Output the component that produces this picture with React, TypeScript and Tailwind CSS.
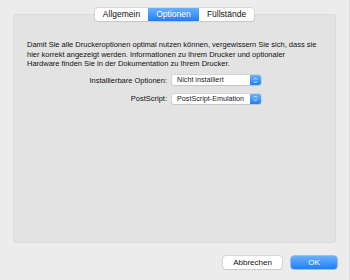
import { useState } from "react";

function Stepper() {
  return (
    <div className="flex h-full w-[11px] items-center justify-center rounded-r-[2px] bg-gradient-to-b from-[#6cb3fa] to-[#1a7ff6]">
      <svg width="5" height="7" viewBox="0 0 5 7" fill="none">
        <path d="M1 2.6 L2.5 1.1 L4 2.6" stroke="white" strokeWidth="0.9" />
        <path d="M1 4.4 L2.5 5.9 L4 4.4" stroke="white" strokeWidth="0.9" />
      </svg>
    </div>
  );
}

function Popup({ value }: { value: string }) {
  return (
    <div className="flex h-[10px] w-[89px] items-stretch rounded-[2px] bg-white shadow-[0_0_0_0.5px_#c4c4c4,0_1px_1px_rgba(0,0,0,0.12)]">
      <span className="flex-1 overflow-hidden whitespace-nowrap pl-[5px] text-[7.2px] leading-[10px] text-[#1a1a1a]">{value}</span>
      <Stepper />
    </div>
  );
}

function App() {
  const [tab, setTab] = useState("Optionen");
  const tabs = [
    { name: "Allgemein", w: "w-[53px]" },
    { name: "Optionen", w: "w-[51px]" },
    { name: "Füllstände", w: "w-[55px]" },
  ];

  return (
    <div
      className="flex h-[280px] w-[350px] flex-col border-r border-[#dcdcdc] bg-[#ececec] text-[#111]"
      style={{ fontFamily: '"Liberation Sans", Arial, sans-serif' }}
    >
      <div className="px-[13px] pt-[8px]">
        <div className="relative z-10 flex justify-center">
          <div className="flex h-[13px] overflow-hidden rounded-[3px] bg-white shadow-[0_0_0_0.5px_#c2c2c2,0_1px_1px_rgba(0,0,0,0.1)]">
            {tabs.map((t, i) => (
              <button
                key={t.name}
                onClick={() => setTab(t.name)}
                className={`${t.w} flex items-center justify-center text-[8.5px] leading-[13px] ${
                  tab === t.name
                    ? "bg-gradient-to-b from-[#68b0fa] to-[#1a7ff6] text-white"
                    : "text-[#111]"
                } ${i > 0 && tab !== t.name && tabs[i - 1].name !== tab ? "border-l border-[#d0d0d0]" : ""}`}
              >
                {t.name}
              </button>
            ))}
          </div>
        </div>

        <div className="-mt-[7px] h-[229px] rounded-[3px] border border-[#dadada] bg-[#e3e3e3] px-[13px] pt-[25px]">
          <p className="whitespace-nowrap text-[7.5px] leading-[9.6px]">
            Damit Sie alle Druckeroptionen optimal nutzen können, vergewissern Sie sich, dass sie
            <br />
            hier korrekt angezeigt werden. Informationen zu Ihrem Drucker und optionaler
            <br />
            Hardware finden Sie in der Dokumentation zu Ihrem Drucker.
          </p>

          <div className="mt-[6px] flex flex-col gap-[7px]">
            <div className="flex items-center">
              <span className="w-[145px] pr-[5px] text-right text-[7.5px]">Installierbare Optionen:</span>
              <Popup value="Nicht installiert" />
            </div>
            <div className="flex items-center">
              <span className="w-[145px] pr-[5px] text-right text-[7.5px]">PostScript:</span>
              <Popup value="PostScript-Emulation" />
            </div>
          </div>
        </div>
      </div>

      <div className="mt-[13px] flex justify-end gap-[9px] pr-[12px]">
        <button className="h-[13px] w-[59px] rounded-[3px] bg-white text-[8px] leading-[13px] shadow-[0_0_0_0.5px_#c2c2c2,0_1px_1px_rgba(0,0,0,0.12)]">
          Abbrechen
        </button>
        <button className="h-[13px] w-[46px] rounded-[3px] bg-gradient-to-b from-[#68b0fa] to-[#1a7ff6] text-[8px] leading-[13px] text-white shadow-[0_0_0_0.5px_#4a90e8]">
          OK
        </button>
      </div>
    </div>
  );
}

export default App;
